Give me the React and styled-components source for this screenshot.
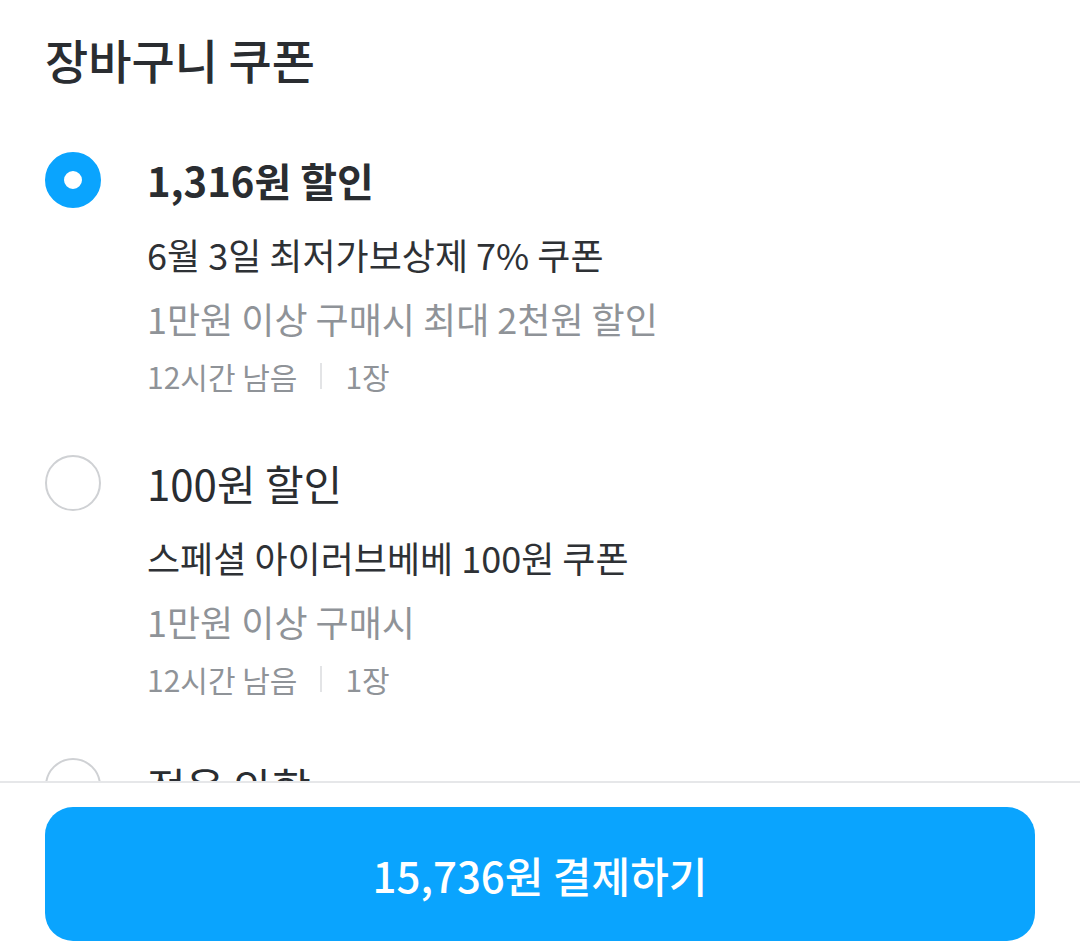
import React, { useState } from "react";
import styled, { createGlobalStyle } from "styled-components";

const GlobalStyle = createGlobalStyle`
  html, body {
    margin: 0;
    padding: 0;
    background: #ffffff;
  }
  body {
    font-family: "Noto Sans CJK KR", "Noto Sans", sans-serif;
    color: #2a2d31;
  }
  * {
    box-sizing: border-box;
  }
`;

const coupons = [
  {
    id: "c1",
    amount: "1,316원 할인",
    name: "6월 3일 최저가보상제 7% 쿠폰",
    condition: "1만원 이상 구매시 최대 2천원 할인",
    remain: "12시간 남음",
    count: "1장",
  },
  {
    id: "c2",
    amount: "100원 할인",
    name: "스페셜 아이러브베베 100원 쿠폰",
    condition: "1만원 이상 구매시",
    remain: "12시간 남음",
    count: "1장",
  },
  {
    id: "none",
    amount: "적용 안함",
  },
];

const App = () => {
  const [selected, setSelected] = useState("c1");

  return (
    <>
      <GlobalStyle />
      <Page>
        <Scroll>
          <Heading>장바구니 쿠폰</Heading>
          <List>
            {coupons.map((c) => {
              const active = c.id === selected;
              return (
                <Item key={c.id} onClick={() => setSelected(c.id)}>
                  <Radio $active={active} />
                  <Body>
                    <Amount $active={active}>{c.amount}</Amount>
                    {c.name && <Name>{c.name}</Name>}
                    {c.condition && <Condition>{c.condition}</Condition>}
                    {c.remain && (
                      <Meta>
                        <span>{c.remain}</span>
                        <Divider />
                        <span>{c.count}</span>
                      </Meta>
                    )}
                  </Body>
                </Item>
              );
            })}
          </List>
        </Scroll>
        <Footer>
          <PayButton>15,736원 결제하기</PayButton>
        </Footer>
      </Page>
    </>
  );
};

const Page = styled.div`
  height: 943px;
  display: flex;
  flex-direction: column;
  overflow: hidden;
`;

const Scroll = styled.div`
  flex: 1;
  overflow: hidden;
  padding: 29px 45px 0;
`;

const Heading = styled.h1`
  margin: 0;
  font-size: 47px;
  line-height: 60px;
  font-weight: 500;
  color: #2a2d31;
`;

const List = styled.div`
  margin-top: 63px;
  display: flex;
  flex-direction: column;
  gap: 53px;
`;

const Item = styled.div`
  display: grid;
  grid-template-columns: 56px 1fr;
  column-gap: 46px;
  align-items: start;
  cursor: pointer;
`;

const Radio = styled.span`
  width: 56px;
  height: 56px;
  border-radius: 50%;
  border: ${(p) => (p.$active ? "19px solid #0aa4fe" : "2px solid #cfd1d4")};
  background: #ffffff;
`;

const Body = styled.div`
  display: flex;
  flex-direction: column;
`;

const Amount = styled.div`
  font-size: ${(p) => (p.$active ? "40px" : "42px")};
  line-height: 56px;
  font-weight: ${(p) => (p.$active ? 700 : 400)};
  color: #2a2d31;
`;

const Name = styled.div`
  margin-top: 14px;
  font-size: 36px;
  line-height: 64px;
  color: #2e3135;
`;

const Condition = styled.div`
  font-size: 36px;
  line-height: 64px;
  color: #8f9398;
`;

const Meta = styled.div`
  display: flex;
  align-items: center;
  font-size: 30px;
  line-height: 52px;
  color: #8f9398;
`;

const Divider = styled.i`
  width: 2px;
  height: 26px;
  background: #e3e4e6;
  margin: 0 23px;
`;

const Footer = styled.div`
  flex: none;
  border-top: 2px solid #e6e7e9;
  background: #ffffff;
  padding: 24px 45px 2px 45px;
`;

const PayButton = styled.button`
  display: flex;
  align-items: center;
  justify-content: center;
  width: 990px;
  height: 134px;
  border: none;
  border-radius: 28px;
  background: #0aa4fe;
  color: #ffffff;
  font-family: "Noto Sans CJK KR", "Noto Sans", sans-serif;
  font-size: 42px;
  font-weight: 500;
  cursor: pointer;
`;

export default App;
